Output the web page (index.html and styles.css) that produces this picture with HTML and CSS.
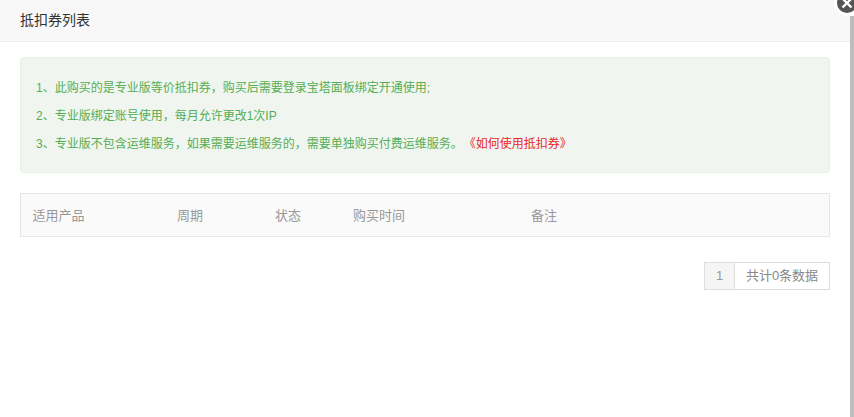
FILE: index.html
```html
<!DOCTYPE html>
<html lang="zh-CN">
<head>
<meta charset="utf-8">
<title>抵扣券列表</title>
<link rel="stylesheet" href="styles.css">
</head>
<body>
<div class="modal">
  <header class="title">抵扣券列表</header>
  <main class="content">
    <ul class="notice">
      <li>1、此购买的是专业版等价抵扣券，购买后需要登录宝塔面板绑定开通使用;</li>
      <li>2、专业版绑定账号使用，每月允许更改1次IP</li>
      <li>3、专业版不包含运维服务，如果需要运维服务的，需要单独购买付费运维服务。<a class="help">《如何使用抵扣券》</a></li>
    </ul>
    <table class="list">
      <thead>
        <tr>
          <th class="c1">适用产品</th>
          <th class="c2">周期</th>
          <th class="c3">状态</th>
          <th class="c4">购买时间</th>
          <th>备注</th>
        </tr>
      </thead>
    </table>
    <div class="pager">
      <span class="page">1</span>
      <span class="total">共计0条数据</span>
    </div>
  </main>
</div>
<div class="scrollbar"></div>
<button class="close" aria-label="关闭">
  <svg width="12" height="12" viewBox="0 0 12 12"><path d="M1.5 1.5 10.5 10.5M10.5 1.5 1.5 10.5" stroke="#fff" stroke-width="2.4" fill="none"/></svg>
</button>
</body>
</html>
```
FILE: styles.css
```css
* { box-sizing: border-box; }
html, body { margin: 0; height: 100%; overflow: hidden; }
body {
  background: #fff;
  font-family: "Liberation Sans", "Noto Sans CJK SC", sans-serif;
  position: relative;
}
.modal { width: 850px; }
.title {
  height: 42px;
  line-height: 41px;
  padding-left: 20px;
  font-size: 14px;
  color: #333;
  background: #f8f8f8;
  border-bottom: 1px solid #eee;
}
.content { padding: 15px 20px 0; }
.notice {
  list-style: none;
  margin: 0;
  padding: 16px 15px 15px;
  height: 116px;
  background: #f0f6ef;
  border: 1px solid #e8f1e8;
  border-radius: 4px;
  font-size: 12px;
  line-height: 28px;
  color: #55ad55;
}
.help { color: #e8262a; margin-left: 7px; }
.list {
  width: 100%;
  margin-top: 20px;
  border-collapse: collapse;
  table-layout: fixed;
  background: #fafafa;
  border: 1px solid #e6e6e6;
}
.list th {
  height: 43px;
  padding: 0 0 1px 11.5px;
  text-align: left;
  font-size: 13px;
  font-weight: 400;
  color: #999;
}
.list .c1 { width: 145px; }
.list .c2 { width: 98px; }
.list .c3 { width: 78px; }
.list .c4 { width: 178px; }
.pager {
  display: flex;
  justify-content: flex-end;
  margin-top: 25px;
  font-size: 13px;
  line-height: 26px;
  color: #888;
}
.page, .total { height: 28px; border: 1px solid #ddd; }
.page {
  width: 31px;
  text-align: center;
  background: #f5f5f5;
  color: #999;
}
.total { width: 95px; border-left: 0; text-align: center; }
.scrollbar {
  position: absolute;
  top: 16px;
  right: 0;
  bottom: 0;
  width: 4px;
  background: #bdbdbd;
}
.close {
  position: absolute;
  top: -10px;
  left: 834px;
  width: 26px;
  height: 26px;
  padding: 0;
  border: 3px solid #fff;
  border-radius: 50%;
  background: #555;
  display: flex;
  align-items: center;
  justify-content: center;
}
```
